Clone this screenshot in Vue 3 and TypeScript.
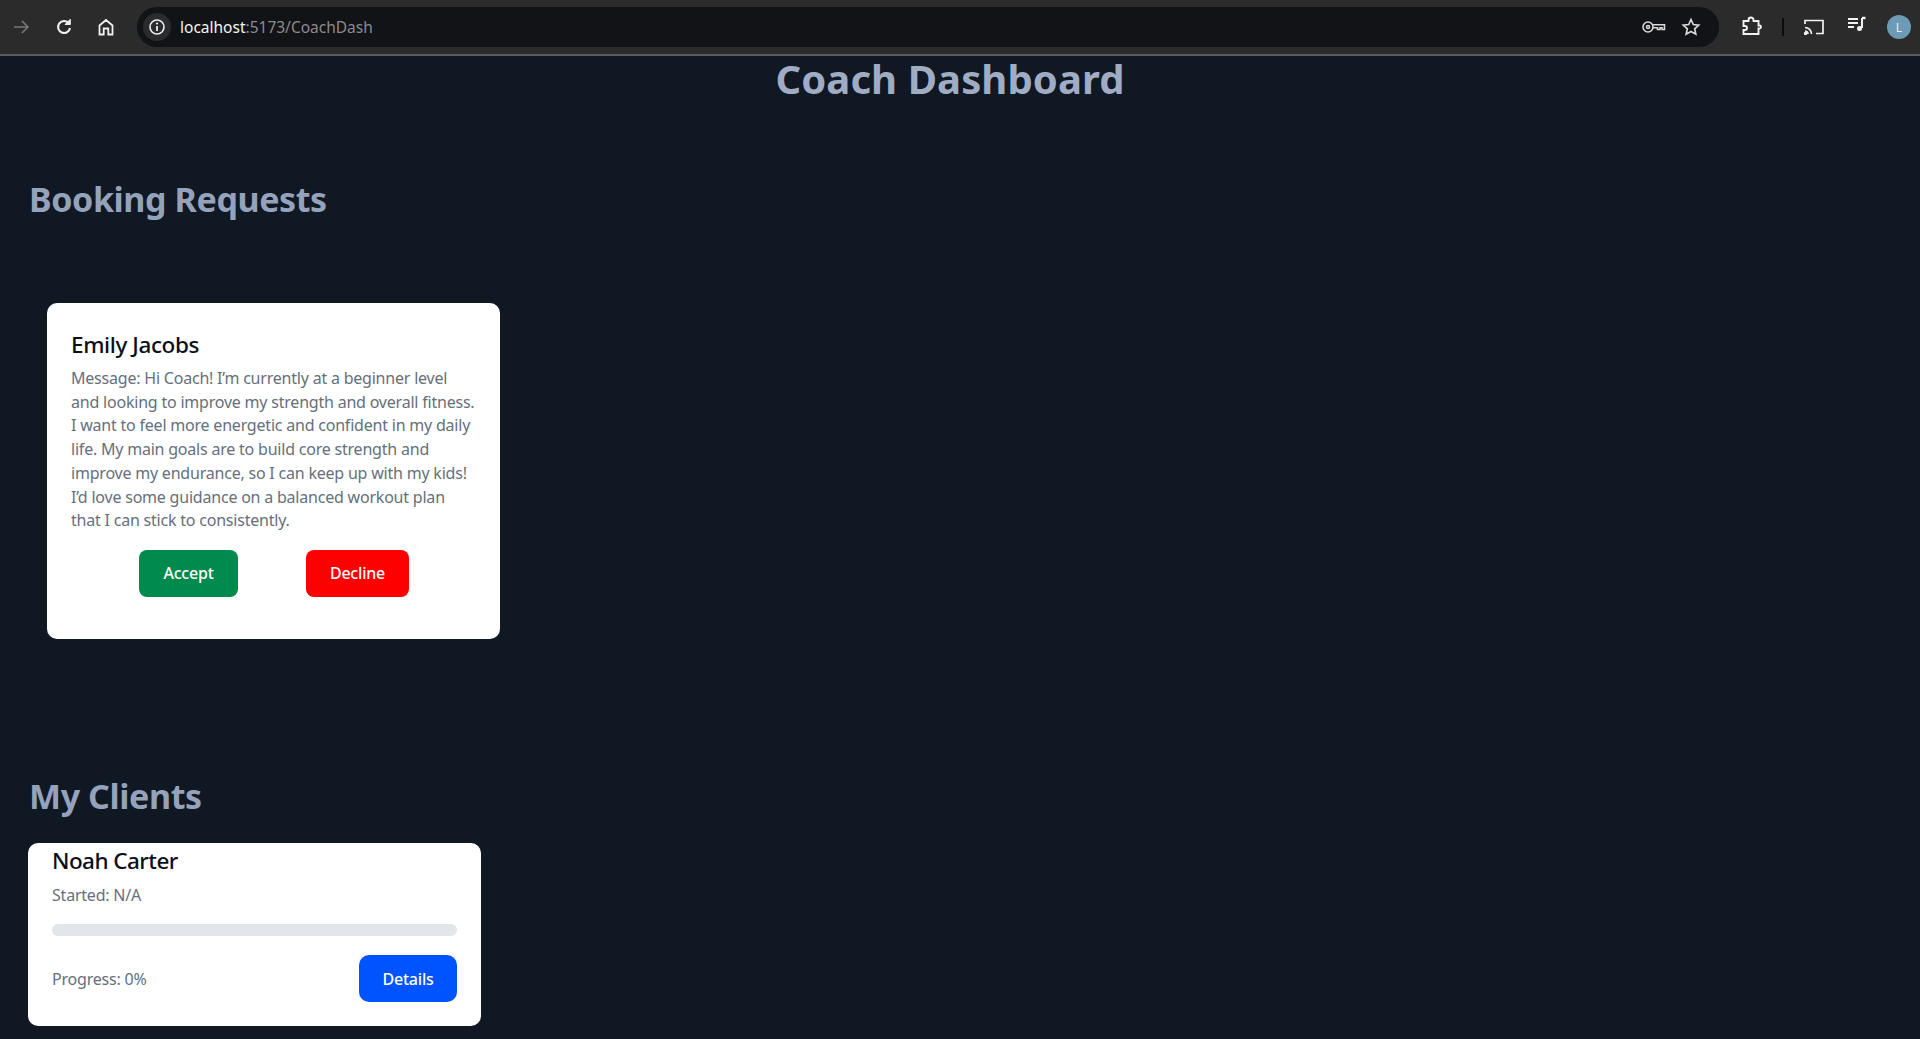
<script setup lang="ts">
const lines: string[] = [
  "Message: Hi Coach! I’m currently at a beginner level",
  "and looking to improve my strength and overall fitness.",
  "I want to feel more energetic and confident in my daily",
  "life. My main goals are to build core strength and",
  "improve my endurance, so I can keep up with my kids!",
  "I’d love some guidance on a balanced workout plan",
  "that I can stick to consistently.",
];
</script>

<template>
  <div class="page">
    <header class="chrome">
      <div class="nav">
        <svg class="ico first" width="20" height="20" viewBox="0 0 20 20" fill="none" stroke="#77787a" stroke-width="1.6"><path d="M3 10h14M11 4l6 6-6 6" /></svg>
        <svg class="ico" width="20" height="20" viewBox="0 0 20 20" fill="none" stroke="#f0f0f0" stroke-width="2.1"><path d="M16 11a6 6 0 1 1-1.600-5.200" /><path d="M16.300 2.300v5.200h-5.200z" fill="#f0f0f0" stroke-width="1" /></svg>
        <svg class="ico home" width="20" height="20" viewBox="0 0 20 20" fill="none" stroke="#f0f0f0" stroke-width="1.8"><path d="M3.500 17.500V8.500L10 3l6.500 5.500v9h-4.200v-6H7.700v6z" /></svg>
      </div>
      <div class="omnibox">
        <span class="info">
          <svg width="18" height="18" viewBox="0 0 18 18" fill="none"><circle cx="9" cy="9" r="7" stroke="#eee" stroke-width="1.6" /><path d="M9 8v5" stroke="#eee" stroke-width="1.8" /><circle cx="9" cy="5.500" r="1.100" fill="#eee" /></svg>
        </span>
        <span class="url"><span class="host">localhost</span>:5173/CoachDash</span>
        <span class="spring"></span>
        <svg class="key" width="24" height="16" viewBox="0 0 24 16" fill="none" stroke="#d8d8d8" stroke-width="1.600"><circle cx="6" cy="8" r="5" /><circle cx="6" cy="8" r="1.500" /><path d="M11 5.800h11.500v4.700h-2.500V8.800h-2v1.700h-2.500V8.800H11" /></svg>
        <svg class="star" width="20" height="20" viewBox="0 0 20 20" fill="none" stroke="#d8d8d8" stroke-width="1.700"><path d="M10 2.500l2.300 5 5.400.6-4 3.700 1.100 5.400L10 14.500l-4.800 2.700 1.100-5.400-4-3.700 5.400-.6z" /></svg>
      </div>
      <div class="tools">
        <svg width="22" height="22" viewBox="0 0 22 22" fill="none" stroke="#f2f2f2" stroke-width="1.900"><path d="M3 6h5V5a2.500 2.500 0 0 1 5 0v1h5v4.500h1a1.500 1.500 0 0 1 0 3h-1V19H3v-4h1.500a2 2 0 0 0 0-4H3z" transform="translate(-.5 -1)" /></svg>
        <span class="sep"></span>
        <svg class="cast" width="20" height="16" viewBox="0 0 20 16" fill="none" stroke="#f2f2f2" stroke-width="1.700"><path d="M1 5V1.500h18v13h-7" /><path d="M1 8.500a6.500 6.500 0 0 1 6.500 6.500M1 12a3 3 0 0 1 3 3" /><circle cx="1.500" cy="14.500" r=".9" fill="#f2f2f2" /></svg>
        <svg class="music" width="20" height="18" viewBox="0 0 20 18" fill="none" stroke="#f2f2f2" stroke-width="1.800"><path d="M1 3h10M1 7h10M1 11h6" /><path d="M15 2v10" stroke-width="2" /><path d="M15 2h3.500" stroke-width="2.500" /><circle cx="12.500" cy="12.500" r="2.500" fill="#f2f2f2" stroke="none" /></svg>
        <span class="avatar">L</span>
      </div>
    </header>

    <main class="content">
      <h1 class="title">Coach Dashboard</h1>

      <section class="requests">
        <h2 class="heading">Booking Requests</h2>
        <article class="request-card">
          <h3 class="name">Emily Jacobs</h3>
          <p class="message"><span v-for="line in lines" :key="line" class="line">{{ line }}</span></p>
          <div class="actions">
            <button class="btn accept" type="button">Accept</button>
            <button class="btn decline" type="button">Decline</button>
          </div>
        </article>
      </section>

      <section class="clients">
        <h2 class="heading">My Clients</h2>
        <article class="client-card">
          <h3 class="name client-name">Noah Carter</h3>
          <p class="muted started">Started: N/A</p>
          <div class="track"></div>
          <div class="client-foot">
            <span class="muted">Progress: 0%</span>
            <button class="btn details" type="button">Details</button>
          </div>
        </article>
      </section>
    </main>
  </div>
</template>

<style scoped>
.page {
  width: 1920px;
  height: 1039px;
  overflow: hidden;
  background: #101823;
  font-family: "Noto Sans", "Open Sans", sans-serif;
  display: flex;
  flex-direction: column;
}
.chrome {
  height: 54px;
  flex: none;
  box-sizing: content-box;
  border-bottom: 2px solid #5c5c5c;
  background: #2b2b2b;
  display: flex;
  align-items: center;
}
.nav {
  display: flex;
  align-items: center;
  gap: 23px;
  width: 137px;
  padding-left: 11px;
  box-sizing: border-box;
}
.ico { flex: none; }
.home { margin-left: -1px; }
.omnibox {
  width: 1582px;
  height: 40px;
  border-radius: 20px;
  background: #121316;
  display: flex;
  align-items: center;
  padding: 0 18px 0 6px;
  box-sizing: border-box;
}
.info {
  width: 28px;
  height: 28px;
  border-radius: 50%;
  background: #2a2b2d;
  display: flex;
  align-items: center;
  justify-content: center;
  flex: none;
}
.url {
  margin-left: 9px;
  font-size: 15.5px;
  color: #8a8b8d;
  letter-spacing: 0;
}
.host { color: #f4f4f4; }
.spring { flex: 1; }
.key { margin-right: 15px; }
.tools {
  flex: 1;
  display: flex;
  align-items: center;
  padding-left: 22px;
}
.sep {
  width: 2px;
  height: 18px;
  background: #0c0c0c;
  margin: 0 20px 0 19px;
}
.music { margin-left: 23px; margin-bottom: 4px; }
.avatar {
  width: 24px;
  height: 24px;
  margin-left: 20px;
  border-radius: 50%;
  background: #6d9ab5;
  color: #e8f0f4;
  font-size: 12px;
  display: flex;
  align-items: center;
  justify-content: center;
}
.content {
  flex: 1;
  min-height: 0;
  display: flex;
  flex-direction: column;
}
.title {
  margin: -1px 0 0;
  padding-right: 20px;
  text-align: center;
  font-size: 40px;
  line-height: 48px;
  font-weight: 700;
  color: #a0acc4;
  letter-spacing: 0.1px;
}
.heading {
  margin: 0;
  font-size: 34px;
  line-height: 40px;
  font-weight: 700;
  color: #95a2bc;
  letter-spacing: -0.4px;
  padding-left: 29px;
}
.requests {
  margin-top: 76px;
}
.request-card {
  width: 453px;
  height: 336px;
  margin: 84px 0 0 47px;
  box-sizing: border-box;
  padding: 26px 24px 24px;
  background: #fff;
  border-radius: 10px;
}
.name {
  margin: 0;
  font-size: 22.5px;
  line-height: 32px;
  font-weight: 500;
  color: #0b0f19;
  letter-spacing: -0.4px;
}
.client-name { letter-spacing: -0.55px; }
.message {
  margin: 6px 0 0;
  font-size: 16px;
  line-height: 23.7px;
  color: #666f7c;
  letter-spacing: -0.21px;
}
.line { display: block; white-space: nowrap; }
.actions {
  display: flex;
  margin: 17px 0 0 68px;
  gap: 68px;
}
.btn {
  border: 0;
  height: 47px;
  border-radius: 8px;
  color: #fff;
  font-family: inherit;
  font-size: 16px;
  font-weight: 500;
  letter-spacing: -0.2px;
  padding: 0;
}
.accept { width: 99px; background: #008a4e; }
.decline { width: 103px; background: #ff0000; }
.details { width: 98px; background: #0054ff; border-radius: 10px; }
.clients {
  margin-top: 137px;
}
.client-card {
  width: 453px;
  height: 183px;
  margin: 27px 0 0 28px;
  box-sizing: border-box;
  padding: 2px 24px 0;
  background: #fff;
  border-radius: 10px;
}
.muted {
  font-size: 16px;
  color: #666f7c;
  letter-spacing: -0.21px;
}
.started {
  margin: 6px 0 0;
  line-height: 24px;
}
.track {
  height: 12px;
  margin-top: 17px;
  border-radius: 6px;
  background: #e2e6ea;
}
.client-foot {
  margin-top: 19px;
  display: flex;
  align-items: center;
  justify-content: space-between;
}
</style>
